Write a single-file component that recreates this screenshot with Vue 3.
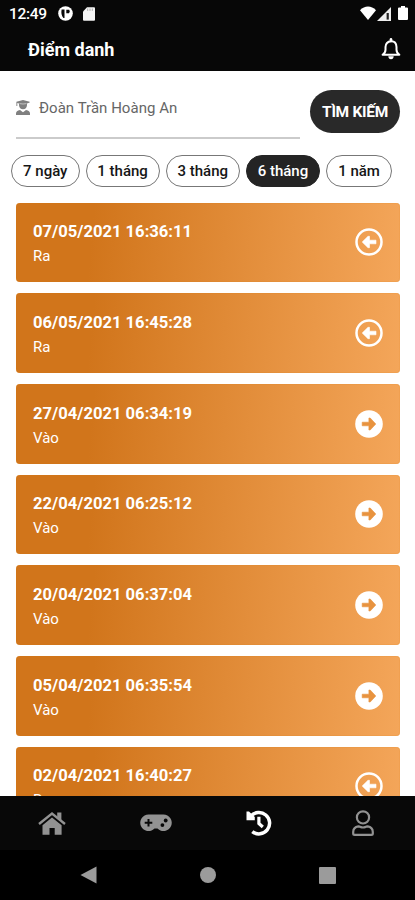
<script setup>
import { ref } from 'vue'

const ranges = [
  { label: '7 ngày', cls: 'w-a' },
  { label: '1 tháng', cls: 'w-b' },
  { label: '3 tháng', cls: 'w-b' },
  { label: '6 tháng', cls: 'w-b' },
  { label: '1 năm', cls: 'w-c' }
]
const active = ref('6 tháng')

const records = [
  { time: '07/05/2021 16:36:11', type: 'Ra' },
  { time: '06/05/2021 16:45:28', type: 'Ra' },
  { time: '27/04/2021 06:34:19', type: 'Vào' },
  { time: '22/04/2021 06:25:12', type: 'Vào' },
  { time: '20/04/2021 06:37:04', type: 'Vào' },
  { time: '05/04/2021 06:35:54', type: 'Vào' },
  { time: '02/04/2021 16:40:27', type: 'Ra' }
]
</script>

<template>
  <div class="screen">
    <header class="top">
      <div class="status">
        <span class="clock">12:49</span>
        <svg class="st-p" viewBox="0 0 15 15">
          <circle cx="7.5" cy="7.5" r="7.3" fill="#fff" />
          <path d="M3.600 3.500H6.500V12H5.400Q2.600 9 3.600 3.500ZM8.300 3.700h2.900q1.300 1.700-.2 3.500H8.300z" fill="#080808" />
        </svg>
        <svg class="st-sd" viewBox="0 0 12 14">
          <path d="M4 .3h7q1 0 1 1v11.4q0 1-1 1H1q-1 0-1-1V4.4z" fill="#f4f4f4" />
          <path d="M4.7 1.500v2.400M7 1.500v2.400M9.3 1.500v2.400" stroke="#aaa" stroke-width="1" />
        </svg>
        <span class="grow"></span>
        <svg class="st-wifi" viewBox="0 0 16 14">
          <path d="M8 14 0 4.2Q3.6.5 8 .5t8 3.7z" fill="#fff" />
        </svg>
        <svg class="st-cell" viewBox="0 0 14 14">
          <path d="M14 0v14H0z" fill="#eee" />
          <path d="M9.600 6h2.200V12.600H9.600z" fill="#222" />
        </svg>
        <svg class="st-bat" viewBox="0 0 10 14">
          <path d="M3 0h4v1.5h2q1 0 1 1V13q0 1-1 1H1q-1 0-1-1V2.500q0-1 1-1h2z" fill="#fff" />
        </svg>
      </div>
      <div class="title-row">
        <h1>Điểm danh</h1>
        <svg class="bell" viewBox="0 0 20 22" fill="none" stroke="#fff">
          <path d="M1.600 16.800q2.900-2 2.900-5.100V9Q4.800 3.600 10 3.200t5.500 5.800v2.700q0 3.100 2.900 5.100z" stroke-width="2" stroke-linejoin="round" />
          <path d="M10 1.300V3" stroke-width="2.600" stroke-linecap="round" />
          <path d="M7.300 18.300h5.400q-.2 2.900-2.700 2.900t-2.700-2.900z" fill="#fff" stroke="none" />
        </svg>
      </div>
    </header>

    <section class="search">
      <div class="field">
        <svg class="grad" viewBox="0 0 14 15" fill="#808080">
          <path d="M7 0 13.700 1.700V2.600L11 3.400V5.300Q10.600 9.300 7 9.300T3 5.300V3.400L1.300 2.900V6H.4V1.700z" />
          <path d="M3.500 3.600q3.500.8 7 0" fill="none" stroke="#ddd" stroke-width=".7" />
          <path d="M4 10 7 12.200 10 10q4 .6 4 3.500V15H0v-1.500Q0 10.600 4 10z" />
        </svg>
        <span>Đoàn Trần Hoàng An</span>
      </div>
      <button class="find">TÌM KIẾM</button>
    </section>

    <nav class="chips">
      <button v-for="r in ranges" :key="r.label" class="chip" :class="[r.cls, { on: r.label === active }]" @click="active = r.label">{{ r.label }}</button>
    </nav>

    <main class="list">
      <article v-for="r in records" :key="r.time" class="card">
        <div class="info">
          <strong>{{ r.time }}</strong>
          <span>{{ r.type }}</span>
        </div>
        <svg v-if="r.type === 'Ra'" class="dir" viewBox="0 0 28 28">
          <circle cx="14" cy="14" r="12.500" fill="none" stroke="#fff" stroke-width="2.500" />
          <path d="M7.200 14 13 8.300H14.500V12.200H21V15.800H14.500V19.700H13z" fill="#fff" stroke="#fff" stroke-width=".6" stroke-linejoin="round" />
        </svg>
        <svg v-else class="dir" viewBox="0 0 28 28">
          <circle cx="14" cy="14" r="13.800" fill="#fff" />
          <path d="M20.800 14 15.200 8H13.900V12.200H7.200V15.800H13.900V20H15.200z" fill="#e8933f" stroke="#e8933f" stroke-width=".6" stroke-linejoin="round" />
        </svg>
      </article>
    </main>

    <nav class="tabs">
      <div class="tab">
        <svg class="i-home" viewBox="0 0 28 23" fill="#929292">
          <path d="M1 12 14 1.600 27 12" fill="none" stroke="#929292" stroke-width="2.400" />
          <path d="M19.200.5h4.200v8l-4.200-3.400z" />
          <path d="M14 5.500 23.600 13.200V22.800H16.700V16H11.500V22.800H4.500V13.200z" />
        </svg>
      </div>
      <div class="tab">
        <svg class="i-pad" viewBox="0 0 32 18">
          <path d="M8.500.5h15a8.300 8.300 0 1 1-6 14.100h-3A8.300 8.300 0 1 1 8.500.5z" fill="#929292" />
          <path d="M8.500 5v7.600M4.700 8.800h7.600" stroke="#080808" stroke-width="2" />
          <circle cx="25.700" cy="6.500" r="1.900" fill="#080808" />
          <circle cx="22.400" cy="11.100" r="1.900" fill="#080808" />
        </svg>
      </div>
      <div class="tab">
        <svg class="i-hist" viewBox="0 0 26 26" fill="none" stroke="#fff">
          <path d="M4.800 6.200A10.700 10.700 0 1 1 6.300 21.600" stroke-width="3.500" />
          <path d="M.5 1.500H3L8.800 7V10.200H.5z" fill="#fff" stroke="none" />
          <path d="M12.900 6.800V13.500L16.800 17" stroke-width="3.200" />
        </svg>
      </div>
      <div class="tab">
        <svg class="i-user" viewBox="0 0 22 26" fill="none" stroke="#929292" stroke-width="2.200">
          <circle cx="11" cy="7.400" r="6.100" />
          <path d="M6.300 16.400q-5 .8-5.100 5.600v1.400q0 1.400 1.500 1.400h16.600q1.500 0 1.500-1.400V22q-.1-4.800-5.100-5.600-1.500 0-2.500.7-2.200.8-4.400 0-1-.7-2.500-.7z" />
        </svg>
      </div>
    </nav>
    <footer class="system">
      <div><svg class="back" viewBox="0 0 17 18"><path d="M16.500.5v17L.5 9z" fill="#9b9b9b" /></svg></div>
      <div><i class="round"></i></div>
      <div><i class="square"></i></div>
    </footer>
  </div>
</template>

<style>
body { margin: 0; background: #fff; }
</style>

<style scoped>
.screen {
  width: 415px;
  height: 900px;
  display: flex;
  flex-direction: column;
  overflow: hidden;
  background: #fff;
  font-family: Roboto, "Liberation Sans", sans-serif;
}
svg { display: block; flex: none; }
button { font-family: inherit; padding: 0; flex: none; box-sizing: border-box; }
.top { height: 71px; flex: none; background: #070707; color: #fff; }
.status { height: 27px; display: flex; align-items: center; padding: 0 7px 0 9px; }
.clock { width: 49px; font-size: 15.5px; font-weight: 500; letter-spacing: -0.3px; }
.st-p { width: 15px; height: 15px; }
.st-sd { width: 12px; height: 14px; margin-left: 10px; }
.grow { flex: 1; }
.st-wifi { width: 16px; height: 14px; margin-bottom: 1px; }
.st-cell { width: 14px; height: 14px; margin-left: 1px; }
.st-bat { width: 10px; height: 14px; margin-left: 7px; margin-bottom: 1px; }
.title-row { height: 44px; display: flex; align-items: center; justify-content: space-between; padding: 1px 14px 0 28px; box-sizing: border-box; }
h1 { margin: 0; font-size: 18px; font-weight: 700; line-height: 44px; }
.bell { width: 20px; height: 22px; margin-bottom: 2px; }
.search { height: 84px; flex: none; display: flex; padding: 19px 15px 0 16px; box-sizing: border-box; justify-content: space-between; }
.field { width: 284px; height: 49px; box-sizing: border-box; border-bottom: 2px solid #cbcbcb; display: flex; align-items: flex-start; font-size: 15px; color: #666; }
.field span { margin: 9px 0 0 9px; line-height: 18px; letter-spacing: 0.03px; }
.grad { width: 14px; height: 15px; margin-top: 10px; }
.find { width: 90px; height: 43px; border: 0; border-radius: 22px; background: #292929; color: #fff; font-size: 15.5px; font-weight: 700; letter-spacing: -0.3px; padding-top: 1px; }
.chips { height: 31px; flex: none; display: flex; gap: 6px; padding-left: 11px; }
.chip { height: 32px; border: 1px solid #777; border-radius: 16px; background: #fff; color: #161616; font-size: 15px; font-weight: 500; letter-spacing: 0; }
.chip.on { background: #242424; border-color: #242424; color: #fff; }
.w-a { width: 68.500px; }
.w-b { width: 74.200px; }
.w-c { width: 66px; }
.list { flex: 1; min-height: 0; overflow: hidden; display: flex; flex-direction: column; gap: 11px; padding: 16.500px 15.500px 0 16px; }
.card { height: 79.700px; flex: none; box-sizing: border-box; border-radius: 4px; display: flex; align-items: center; justify-content: space-between; padding: 0 17px; color: #fff; background: linear-gradient(95deg, #d1751b 20%, #f4a65a 100%); box-shadow: inset 0 0 1px #d87a10; }
.info { display: flex; flex-direction: column; padding-top: 3px; }
.info strong { font-size: 16.600px; line-height: 25px; font-weight: 700; }
.info span { font-size: 15px; line-height: 24px; }
.dir { width: 28px; height: 28px; }
.tabs { height: 54px; flex: none; display: flex; background: #080808; }
.tab { flex: 1; display: flex; align-items: center; justify-content: center; }
.i-home { width: 28px; height: 23px; }
.i-pad { width: 32px; height: 18px; }
.i-hist { width: 26px; height: 26px; }
.i-user { width: 22px; height: 26px; }
.system { height: 50px; flex: none; display: flex; justify-content: center; background: #000; }
.system div { width: 119.500px; display: flex; align-items: center; justify-content: center; }
.back { width: 17px; height: 18px; }
.round { width: 16px; height: 16px; border-radius: 50%; background: #9b9b9b; }
.square { width: 17px; height: 17px; border-radius: 1px; background: #9b9b9b; }
</style>
